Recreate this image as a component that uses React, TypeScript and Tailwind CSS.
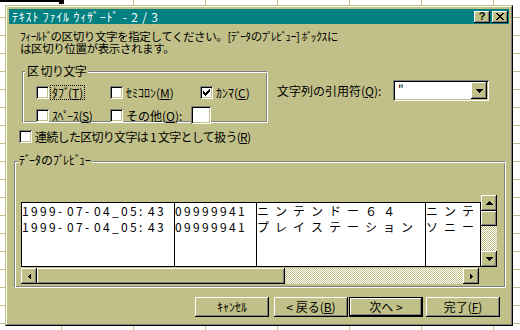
import React from "react";

const raised =
  "bg-[#c0c088] shadow-[inset_-1px_-1px_0_#000000,inset_1px_1px_0_#ffffff,inset_-2px_-2px_0_#808080]";
const sunken =
  "shadow-[inset_1px_1px_0_#808080,inset_-1px_-1px_0_#ffffff,inset_2px_2px_0_#000000,inset_-2px_-2px_0_#c0c088]";
const etched =
  "border border-t-[#808080] border-l-[#808080] border-r-white border-b-white shadow-[inset_1px_1px_0_#ffffff,inset_-1px_-1px_0_#808080]";
const dither =
  "bg-[repeating-conic-gradient(#c0c088_0%_25%,#ffffff_0%_50%)] bg-size-[2px_2px]";

function K({ t }: { t: string }) {
  const parts: React.ReactNode[] = [];
  let buf = "";
  let key = 0;
  for (const ch of t) {
    if (ch === "ﾞ" || ch === "ﾟ") {
      if (buf) {
        parts.push(buf);
        buf = "";
      }
      parts.push(
        <span key={key++} className="tracking-[-2px]">
          {ch}
        </span>
      );
    } else buf += ch;
  }
  if (buf) parts.push(buf);
  return <>{parts}</>;
}

function Mn({ pre, m, post }: { pre: string; m: string; post: string }) {
  return (
    <>
      <K t={pre} />
      <span className="underline underline-offset-1">{m}</span>
      {post}
    </>
  );
}

function Arrow({ dir }: { dir: "up" | "down" | "left" | "right" }) {
  if (dir === "up" || dir === "down") {
    const rows: [number, number][] = [
      [3, 1],
      [2, 3],
      [1, 5],
      [0, 7],
    ];
    return (
      <svg width="7" height="4" shapeRendering="crispEdges" className="block">
        {rows.map(([x, w], i) => (
          <rect key={i} x={x} y={dir === "up" ? i : 3 - i} width={w} height={1} fill="#000" />
        ))}
      </svg>
    );
  }
  const cols: [number, number][] = [
    [2, 1],
    [1, 3],
    [0, 5],
  ];
  return (
    <svg width="3" height="5" shapeRendering="crispEdges" className="block">
      {cols.map(([y, h], i) => (
        <rect key={i} x={dir === "left" ? i : 2 - i} y={y} width={1} height={h} fill="#000" />
      ))}
    </svg>
  );
}

function CheckMark() {
  const px: [number, number, number][] = [
    [6, 0, 1],
    [5, 1, 2],
    [0, 2, 1],
    [4, 2, 3],
    [0, 3, 2],
    [3, 3, 3],
    [0, 4, 5],
    [1, 5, 3],
    [2, 6, 1],
  ];
  return (
    <svg width="7" height="7" shapeRendering="crispEdges" className="block">
      {px.map(([x, y, w], i) => (
        <rect key={i} x={x} y={y} width={w} height={1} fill="#000" />
      ))}
    </svg>
  );
}

function CloseGlyph() {
  const px: [number, number, number][] = [
    [0, 0, 2],
    [6, 0, 2],
    [1, 1, 2],
    [5, 1, 2],
    [2, 2, 4],
    [3, 3, 2],
    [2, 4, 4],
    [1, 5, 2],
    [5, 5, 2],
    [0, 6, 2],
    [6, 6, 2],
  ];
  return (
    <svg width="8" height="7" shapeRendering="crispEdges" className="block">
      {px.map(([x, y, w], i) => (
        <rect key={i} x={x} y={y} width={w} height={1} fill="#000" />
      ))}
    </svg>
  );
}

function Box({ checked }: { checked?: boolean }) {
  return (
    <div className={`w-[13px] h-[13px] shrink-0 bg-white p-[3px] ${sunken}`}>
      {checked && <CheckMark />}
    </div>
  );
}

function CheckItem({
  children,
  checked,
  focus,
  className,
  labelClass,
}: {
  children: React.ReactNode;
  checked?: boolean;
  focus?: boolean;
  className?: string;
  labelClass?: string;
}) {
  return (
    <div className={`flex items-center h-[13px] ${className ?? ""}`}>
      <Box checked={checked} />
      <span
        className={`ml-[2px] px-[1px] leading-[13px] whitespace-nowrap ${
          focus ? "outline-1 outline-dotted outline-black" : ""
        } ${labelClass ?? ""}`}
      >
        {children}
      </span>
    </div>
  );
}

function Cells({ t }: { t: string }) {
  return (
    <div className="flex h-[16px] leading-[16px] whitespace-nowrap">
      {Array.from(t).map((ch, i) => {
        const c = ch.charCodeAt(0);
        const half = c < 0x100 || (c >= 0xff61 && c <= 0xff9f);
        return (
          <span key={i} className={half ? "inline-block shrink-0 w-[9px]" : "inline-block shrink-0 w-[18px]"}>
            {ch}
          </span>
        );
      })}
    </div>
  );
}

function Btn({ children, def, className }: { children: React.ReactNode; def?: boolean; className?: string }) {
  return (
    <div
      className={`w-[74px] h-[20px] flex items-center justify-center leading-[12px] ${
        def
          ? "bg-[#c0c088] border border-black shadow-[inset_-1px_-1px_0_#000000,inset_1px_1px_0_#ffffff,inset_-2px_-2px_0_#808080]"
          : raised
      } ${className ?? ""}`}
    >
      {children}
    </div>
  );
}

function Dialog() {
  return (
    <div className="w-[508px] h-[321px] border border-t-[#c0c088] border-l-[#c0c088] border-r-black border-b-black">
      <div className="h-full border border-t-white border-l-white border-r-[#808080] border-b-[#808080] bg-[#c0c088] p-[2px] flex flex-col">
        {/* title bar */}
        <div className="h-[15px] shrink-0 bg-[#008080] flex items-center pl-[3px] pr-[1px]">
          <span className="text-white tracking-[0.8px] leading-[12px] whitespace-nowrap">ﾃｷｽﾄ ﾌｧｲﾙ ｳｨｻﾞｰﾄﾞ - 2 / 3</span>
          <div className="flex-1" />
          <div className={`w-[16px] h-[12px] flex items-center justify-center ${raised}`}>
            <span className="font-['Liberation_Sans',sans-serif] font-bold text-[11px] leading-none text-black">?</span>
          </div>
          <div className={`ml-[2px] w-[16px] h-[12px] flex items-center justify-center ${raised}`}>
            <CloseGlyph />
          </div>
        </div>

        {/* client */}
        <div className="flex flex-col">
          <p className="mt-[6px] ml-[11px] text-[11.5px] leading-[12px] tracking-[-0.4px] whitespace-nowrap">
            <K t="ﾌｨｰﾙﾄﾞの区切り文字を指定してください。[ﾃﾞｰﾀのﾌﾟﾚﾋﾞｭｰ] ﾎﾞｯｸｽに" />
            <br />
            <K t="は区切り位置が表示されます。" />
          </p>

          <div className="mt-[17px] ml-[13px] flex items-start">
            <div className={`relative w-[246px] h-[52px] pt-[14px] pl-[13px] ${etched}`}>
              <span className="absolute left-[2px] top-[-7px] px-[2px] bg-[#c0c088] leading-[12px] tracking-[-0.6px] whitespace-nowrap">
                区 切り文字
              </span>
              <div className="flex items-center">
                <CheckItem focus className="w-[74px]">
                  <Mn pre="ﾀﾌﾞ(" m="T" post=")" />
                </CheckItem>
                <CheckItem className="w-[90px]">
                  <Mn pre="ｾﾐｺﾛﾝ(" m="M" post=")" />
                </CheckItem>
                <CheckItem checked>
                  <Mn pre="ｶﾝﾏ(" m="C" post=")" />
                </CheckItem>
              </div>
              <div className="mt-[7px] flex items-center">
                <CheckItem className="w-[74px]" labelClass="tracking-[-0.4px]">
                  <Mn pre="ｽﾍﾟｰｽ(" m="S" post=")" />
                </CheckItem>
                <CheckItem>
                  <Mn pre="その他(" m="O" post="):" />
                </CheckItem>
                <div className={`ml-[8px] w-[20px] h-[18px] bg-white ${sunken}`} />
              </div>
            </div>

            <div className="ml-[9px] mt-[9px] flex items-center">
              <span className="w-[116px] leading-[12px] whitespace-nowrap">
                <Mn pre="文字列の引用符(" m="Q" post="):" />
              </span>
              <div className={`w-[96px] h-[21px] bg-white p-[2px] flex ${sunken}`}>
                <div className="flex-1 pl-[3px] leading-[14px]">"</div>
                <div className={`w-[16px] h-[17px] flex items-center justify-center ${raised}`}>
                  <Arrow dir="down" />
                </div>
              </div>
            </div>
          </div>

          <CheckItem className="mt-[7px] ml-[10px]" labelClass="tracking-[-0.7px]">
            <Mn pre="連続した区切り文字は 1 文字として扱う(" m="R" post=")" />
          </CheckItem>

          {/* preview group */}
          <div className={`relative mt-[18px] ml-[5px] w-[492px] h-[127px] ${etched}`}>
            <span className="absolute left-[3px] top-[-8px] px-[1px] bg-[#c0c088] leading-[12px] whitespace-nowrap">
              <K t="ﾃﾞｰﾀのﾌﾟﾚﾋﾞｭｰ" />
            </span>
            <div className="pt-[33px] pl-[6px] flex items-start">
              <div className="mt-[7px] w-[460px] flex flex-col">
                <div className="h-[65px] border border-black bg-white flex overflow-hidden">
                  <div className="w-[153px] shrink-0 border-r border-black">
                    <Cells t="1999-07-04_05:43" />
                    <Cells t="1999-07-04_05:43" />
                  </div>
                  <div className="w-[82px] shrink-0 border-r border-black">
                    <Cells t="09999941" />
                    <Cells t="09999941" />
                  </div>
                  <div className="w-[169px] shrink-0 border-r border-black overflow-hidden">
                    <Cells t="ニンテンドー６４" />
                    <Cells t="プレイステーション" />
                  </div>
                  <div className="flex-1 overflow-hidden">
                    <Cells t="ニンテ" />
                    <Cells t="ソニー" />
                  </div>
                </div>
                <div className="mt-[1px] w-[458px] h-[16px] flex">
                  <div className={`w-[16px] h-[16px] flex items-center justify-center ${raised}`}>
                    <Arrow dir="left" />
                  </div>
                  <div className={`w-[248px] h-[16px] ${raised}`} />
                  <div className={`flex-1 h-[16px] ${dither}`} />
                  <div className={`w-[16px] h-[16px] flex items-center justify-center ${raised}`}>
                    <Arrow dir="right" />
                  </div>
                </div>
              </div>
              <div className="w-[16px] h-[72px] flex flex-col">
                <div className={`h-[16px] flex items-center justify-center ${raised}`}>
                  <Arrow dir="up" />
                </div>
                <div className={`h-[15px] ${raised}`} />
                <div className={`h-[25px] ${dither}`} />
                <div className={`h-[16px] flex items-center justify-center ${raised}`}>
                  <Arrow dir="down" />
                </div>
              </div>
            </div>
          </div>

          {/* buttons */}
          <div className="mt-[9px] ml-[186px] flex">
            <Btn>
              <K t="ｷｬﾝｾﾙ" />
            </Btn>
            <Btn className="ml-[5px]">
              <Mn pre="< 戻る(" m="B" post=")" />
            </Btn>
            <Btn def className="ml-[1px]">
              次へ &gt;
            </Btn>
            <Btn className="ml-[3px]">
              <Mn pre="完了(" m="F" post=")" />
            </Btn>
          </div>
        </div>
      </div>
    </div>
  );
}

export default function App() {
  return (
    <div className="relative w-[520px] h-[330px] overflow-hidden bg-white bg-[linear-gradient(to_right,#c0c088_1px,transparent_1px),linear-gradient(to_bottom,#c0c088_1px,transparent_1px)] bg-size-[72px_18px] bg-position-[61px_17px] pl-[5px] pt-[5px] font-['Noto_Sans_CJK_JP',sans-serif] text-[12px] text-black">
      <div className="absolute left-0 top-0 w-[60px] h-[2px] bg-black" />
      <div className="absolute left-[59px] top-0 w-[5px] h-[4px] bg-black" />
      <Dialog />
    </div>
  );
}
